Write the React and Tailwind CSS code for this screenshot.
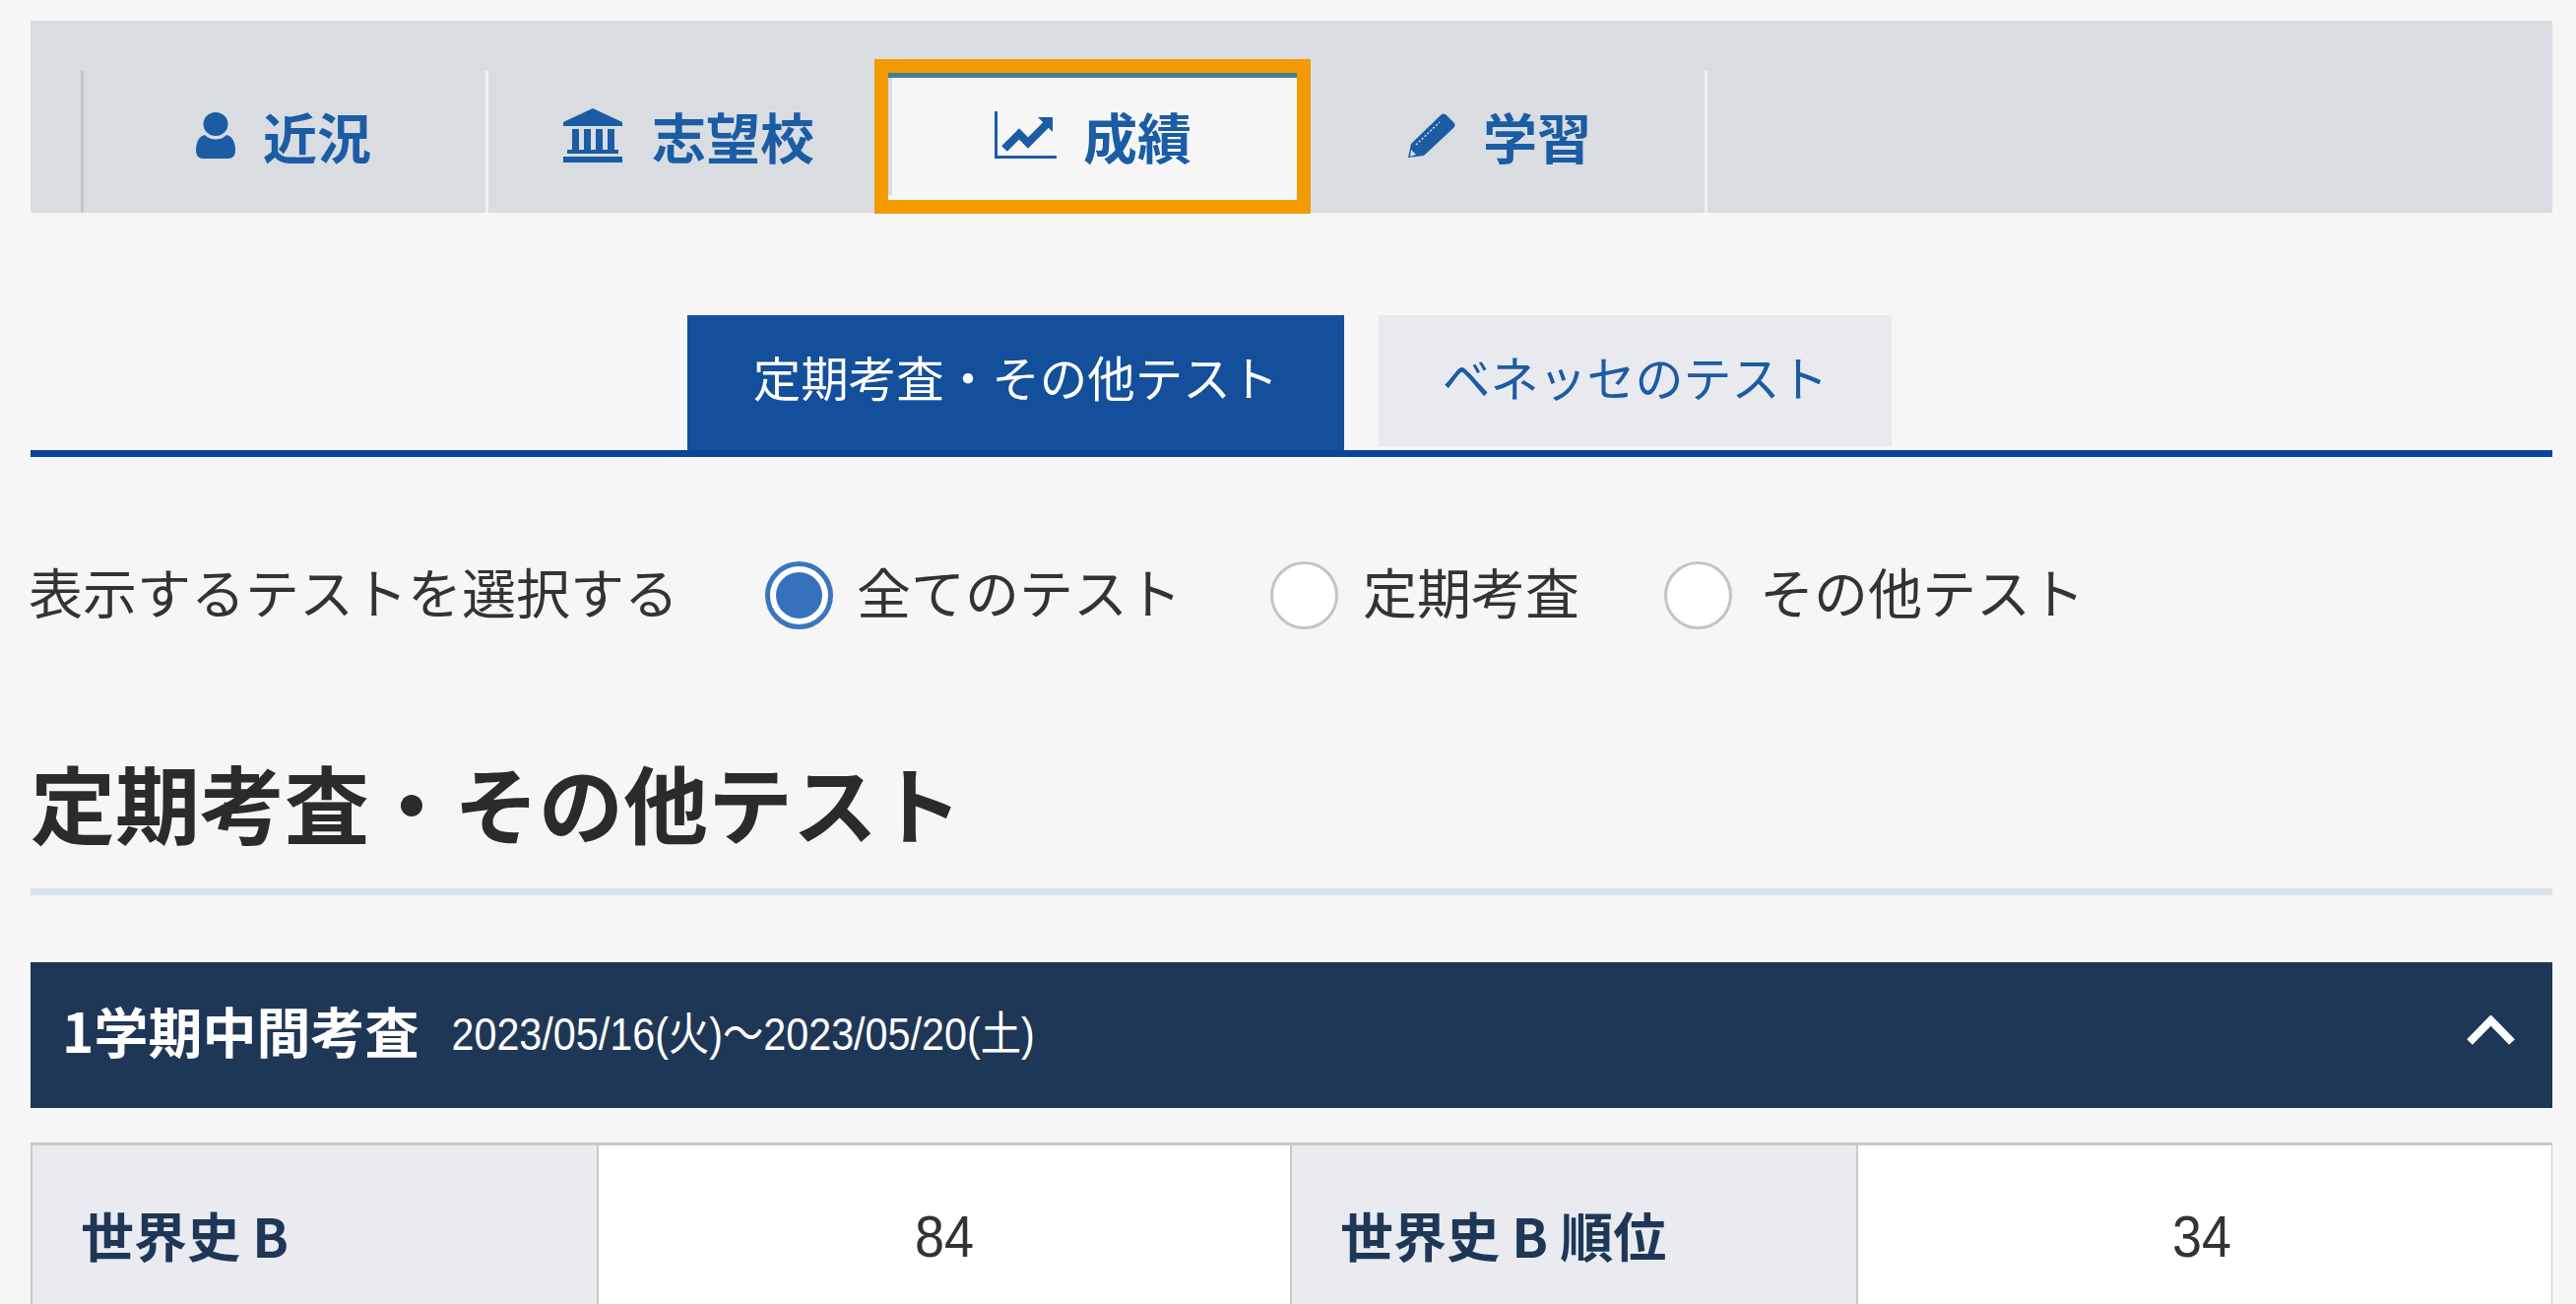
import React from 'react'

const jp = '[font-family:"Noto_Sans_CJK_JP",sans-serif]'

const UserIcon = () => (
  <svg className="w-[40px] h-[47px] shrink-0" viewBox="0 0 40 47" fill="#1b5ca4">
    <ellipse cx="20" cy="12" rx="12.5" ry="12" />
    <path d="M9 23c3 3 7 4.500 11 4.500S28 26 31 23c6 1.500 9 7 9 16 0 5-3 8-7 8H7c-4 0-7-3-7-8 0-9 3-14.500 9-16z" />
  </svg>
)

const BankIcon = () => (
  <svg className="w-[60px] h-[55px] shrink-0" viewBox="0 0 60 55" fill="#1b5ca4">
    <path d="M30 0 60 14v4H0v-4z" />
    <rect x="9" y="21" width="7" height="21" />
    <rect x="21" y="21" width="7" height="21" />
    <rect x="33" y="21" width="7" height="21" />
    <rect x="45" y="21" width="7" height="21" />
    <rect x="4" y="42" width="52" height="4" />
    <rect x="0" y="49" width="60" height="6" />
  </svg>
)

const ChartIcon = () => (
  <svg className="w-[63px] h-[48px] shrink-0" viewBox="0 0 63 48" fill="none">
    <path d="M1.500 0v46.500H63" stroke="#1b5ca4" strokeWidth="3" />
    <path d="m10 38 15-15 9 9 19-19" stroke="#1b5ca4" strokeWidth="8" />
    <path d="M44 6h15v15z" fill="#1b5ca4" />
  </svg>
)

const PencilIcon = () => (
  <svg className="w-[48px] h-[45px] shrink-0" viewBox="0 0 48 45" fill="#1b5ca4">
    <path d="M0 45 3 31 33 2c2-2 4-2 6 0l7 7c2 2 2 4 0 6L16 43z" />
    <path d="m8 32 24-23" stroke="#d9dde3" strokeWidth="1.500" strokeDasharray="2 2" />
    <path d="m3 37 5 5-6 2z" fill="#d9dde3" />
  </svg>
)

const tabs = [
  { label: '近況', Icon: UserIcon, box: 'w-[411px] pl-[114px] gap-[28px] border-l-[3px] border-[#c3c7cd]' },
  { label: '志望校', Icon: BankIcon, box: 'w-[395px] pl-[76px] gap-[30px] border-l-[3px] border-[#eef0f3]' },
]

function Radio({ checked, label, className, labelClass = 'ml-[25px]' }) {
  return (
    <div className={`flex items-center ${className}`}>
      {checked ? (
        <span className="w-[69px] h-[69px] rounded-full border-[5px] border-[#3a76bd] bg-white flex items-center justify-center shrink-0">
          <span className="w-[47px] h-[47px] rounded-full bg-[#3672bb]"></span>
        </span>
      ) : (
        <span className="w-[69px] h-[69px] rounded-full border-[3px] border-[#c4c4c4] bg-white shrink-0"></span>
      )}
      <span className={`${labelClass} text-[55px] leading-[69px] mb-[10px] text-[#333]`}>{label}</span>
    </div>
  )
}

export default function App() {
  return (
    <div className={`${jp} h-[1324px] overflow-hidden bg-[#f6f6f6] pl-[31px] pr-[24px] pt-[21px]`}>
      {/* main nav */}
      <nav className="h-[195px] bg-[#d9dde2] flex items-end pl-[51px]">
        {tabs.map(({ label, Icon, box }) => (
          <div key={label} className={`h-[144px] flex items-center pb-[13px] ${box}`}>
            <Icon />
            <span className="text-[55px] leading-none font-bold text-[#1b5ca4]">{label}</span>
          </div>
        ))}
        <div className="w-[443px] h-[157px] border-[14px] border-[#f29b00] bg-[#f6f6f6] mb-[-1px]">
          <div className="h-[5px] bg-[#4a7a94]"></div>
          <div className="h-[119px] flex items-center pl-[104px] pb-[3px] gap-[27px] border-l-[4px] border-[#d9dde2]">
            <ChartIcon />
            <span className="text-[55px] leading-none font-bold text-[#1b5ca4]">成績</span>
          </div>
        </div>
        <div className="w-[403px] h-[144px] flex items-center pb-[13px] pl-[99px] gap-[28px] border-r-[3px] border-[#eef0f3]">
          <PencilIcon />
          <span className="text-[55px] leading-none font-bold text-[#1b5ca4]">学習</span>
        </div>
      </nav>

      {/* sub tabs */}
      <div className="mt-[104px] h-[144px] flex items-stretch pl-[667px] border-b-[7px] border-[#0a4596]">
        <div className="w-[667px] flex items-center justify-center bg-[#134f9b] text-white text-[48.500px] pb-[13px]">定期考査・その他テスト</div>
        <div className="ml-[35px] w-[521px] mb-[4px] flex items-center justify-center bg-[#e9eaef] text-[#1b5ca4] text-[49px] pb-[9px]">ベネッセのテスト</div>
      </div>

      {/* test filter */}
      <div className="mt-[106px] flex items-center h-[69px]">
        <span className="w-[748px] -ml-[2px] text-[55px] leading-[69px] mb-[10px] text-[#333] whitespace-nowrap">表示するテストを選択する</span>
        <Radio checked label="全てのテスト" className="w-[513px]" labelClass="ml-[24px]" />
        <Radio label="定期考査" className="w-[400px]" />
        <Radio label="その他テスト" labelClass="ml-[28px]" />
      </div>

      {/* section */}
      <h2 className="mt-[125px] pb-[38px] text-[86px] leading-[100px] font-bold text-[#2b2b2b] border-b-[7px] border-[#dbe2ea] whitespace-nowrap">定期考査・その他テスト</h2>

      <div className="mt-[68px] h-[148px] bg-[#1f3757] flex items-center justify-between pl-[32px] pr-[38px] text-white">
        <div className="flex items-center pb-[12px]">
          <span className="text-[55px] leading-none font-bold">1学期中間考査</span>
          <span className="ml-[33px] inline-block scale-y-[1.12] text-[41.300px] leading-none pt-[12px] [font-family:'Liberation_Sans','Noto_Sans_CJK_JP',sans-serif]">2023/05/16(火)～2023/05/20(土)</span>
        </div>
        <svg className="w-[49px] h-[30px] mb-[10px]" viewBox="0 0 49 30" fill="none">
          <path d="M3 27 24.500 5 46 27" stroke="#fff" strokeWidth="8" />
        </svg>
      </div>

      <div className="mt-[35px] grid grid-cols-[575px_704px_575px_704px] border-t-[3px] border-l-[2px] border-r-[2px] border-[#c9c9c9] h-[300px]">
        <div className="bg-[#e9ebf0] border-r-[2px] border-[#c9c9c9] pl-[49px] pt-[58px] text-[54px] leading-[66px] font-bold text-[#1f3757]">世界史 B</div>
        <div className="bg-white border-r-[2px] border-[#c9c9c9] text-center pt-[59px] text-[54px] leading-[66px] text-[#333] [font-family:'Liberation_Sans',sans-serif]"><span className="inline-block scale-y-[1.1]">84</span></div>
        <div className="bg-[#e9ebf0] border-r-[2px] border-[#c9c9c9] pl-[49px] pt-[58px] text-[54px] leading-[66px] font-bold text-[#1f3757]">世界史 B 順位</div>
        <div className="bg-white text-center pt-[59px] pr-[6px] text-[54px] leading-[66px] text-[#333] [font-family:'Liberation_Sans',sans-serif]"><span className="inline-block scale-y-[1.1]">34</span></div>
      </div>
    </div>
  )
}
